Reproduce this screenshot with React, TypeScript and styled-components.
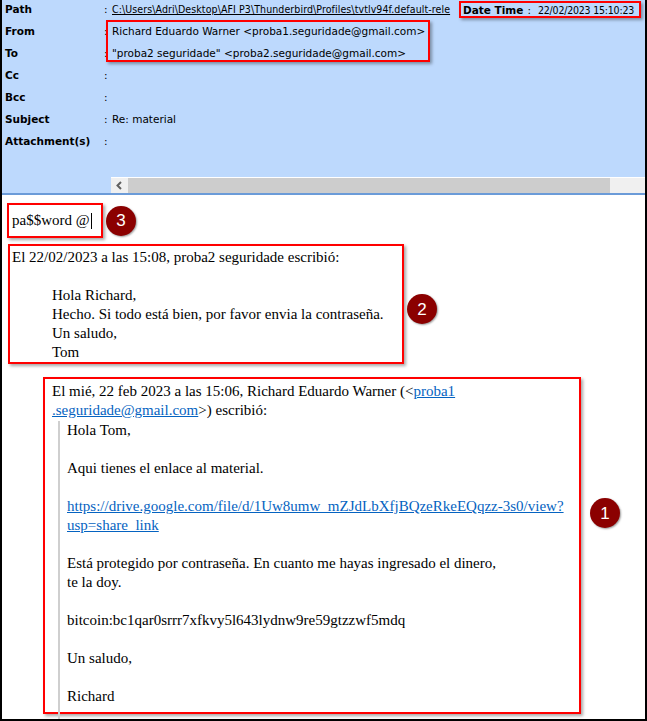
import React from "react";
import styled, { createGlobalStyle } from "styled-components";

const GlobalStyle = createGlobalStyle`
  html, body {
    margin: 0;
    padding: 0;
    background: #fff;
  }
`;

const headerRows = [
  { label: "Cc", value: "" },
  { label: "Bcc", value: "" },
  { label: "Subject", value: "Re: material" },
  { label: "Attachment(s)", value: "" },
];

export default function App() {
  return (
    <>
      <GlobalStyle />
      <Frame>
        <Header>
          <Fields>
            <Row>
              <Label>Path</Label>
              <Colon>:</Colon>
              <PathCell>
                <PathLink>
                  C:\Users\Adri\Desktop\AFI P3\Thunderbird\Profiles\tvtlv94f.default-rele
                </PathLink>
                <DateBox>
                  <Label>Date Time</Label>
                  <DateColon>:</DateColon>
                  <DateValue>22/02/2023 15:10:23</DateValue>
                </DateBox>
              </PathCell>
            </Row>
            <Row>
              <Label>From</Label>
              <Colon>:</Colon>
              <Value>Richard Eduardo Warner &lt;proba1.seguridade@gmail.com&gt;</Value>
            </Row>
            <Row>
              <Label>To</Label>
              <Colon>:</Colon>
              <Value>"proba2 seguridade" &lt;proba2.seguridade@gmail.com&gt;</Value>
            </Row>
            {headerRows.map((r) => (
              <Row key={r.label}>
                <Label>{r.label}</Label>
                <Colon>:</Colon>
                <Value>{r.value}</Value>
              </Row>
            ))}
          </Fields>
          <AddressHighlight />
          <ScrollBar>
            <ScrollButton>
              <svg width="17" height="15" viewBox="0 0 17 15">
                <polyline points="10,4 6.5,7.5 10,11" fill="none" stroke="#606060" strokeWidth="2" />
              </svg>
            </ScrollButton>
            <ScrollThumb />
            <ScrollTrack />
          </ScrollBar>
        </Header>

        <Body>
          <AnnotatedRow>
            <PasswordBox>
              pa$$word @<Caret />
            </PasswordBox>
            <Badge>3</Badge>
          </AnnotatedRow>

          <AnnotatedRow>
            <ReplyBox>
              <Line>El 22/02/2023 a las 15:08, proba2 seguridade escribió:</Line>
              <Line>&nbsp;</Line>
              <Indented>
                <Line>Hola Richard,</Line>
                <Line>Hecho. Si todo está bien, por favor envia la contraseña.</Line>
                <Line>Un saludo,</Line>
                <Line>Tom</Line>
              </Indented>
            </ReplyBox>
            <Badge $offset={16}>2</Badge>
          </AnnotatedRow>

          <AnnotatedRow $align="flex-start">
            <QuoteBox>
              <Line>
                El mié, 22 feb 2023 a las 15:06, Richard Eduardo Warner (&lt;
                <Link>proba1</Link>
              </Line>
              <Line>
                <Link>.seguridade@gmail.com</Link>&gt;) escribió:
              </Line>
              <Quote>
                <Line>Hola Tom,</Line>
                <Line>&nbsp;</Line>
                <Line>Aqui tienes el enlace al material.</Line>
                <Line>&nbsp;</Line>
                <Line>
                  <Link>https://drive.google.com/file/d/1Uw8umw_mZJdLbXfjBQzeRkeEQqzz-3s0/view?</Link>
                </Line>
                <Line>
                  <Link>usp=share_link</Link>
                </Line>
                <Line>&nbsp;</Line>
                <Line>Está protegido por contraseña. En cuanto me hayas ingresado el dinero,</Line>
                <Line>te la doy.</Line>
                <Line>&nbsp;</Line>
                <Line>bitcoin:bc1qar0srrr7xfkvy5l643lydnw9re59gtzzwf5mdq</Line>
                <Line>&nbsp;</Line>
                <Line>Un saludo,</Line>
                <Line>&nbsp;</Line>
                <Line>Richard</Line>
                <Line>&nbsp;</Line>
              </Quote>
            </QuoteBox>
            <Badge $offset={134} $gap={9}>1</Badge>
          </AnnotatedRow>
        </Body>
      </Frame>
    </>
  );
}

const Frame = styled.div`
  width: 647px;
  height: 721px;
  box-sizing: border-box;
  border: 2px solid #000;
  border-top: none;
  display: flex;
  flex-direction: column;
  overflow: hidden;
  background: #fff;
`;

const Header = styled.div`
  position: relative;
  flex: 0 0 195px;
  box-sizing: border-box;
  background: #bdd9fd;
  border-bottom: 2px solid #6b9bd8;
  display: flex;
  flex-direction: column;
`;

const Fields = styled.div`
  padding-left: 3px;
`;

const Row = styled.div`
  display: grid;
  grid-template-columns: 99px 8px 1fr;
  height: 18px;
  margin-bottom: 4px;
  align-items: center;
  font-family: "DejaVu Sans", "Liberation Sans", sans-serif;
  font-size: 10.5px;
  color: #000;
`;

const Label = styled.span`
  font-weight: bold;
  white-space: nowrap;
`;

const Colon = styled.span``;

const Value = styled.span`
  white-space: nowrap;
`;

const PathCell = styled.div`
  display: flex;
  align-items: center;
  min-width: 0;
`;

const PathLink = styled.span`
  flex: 1;
  min-width: 0;
  white-space: nowrap;
  text-decoration: underline;
  font-family: "DejaVu Sans Condensed", "DejaVu Sans", sans-serif;
  font-stretch: condensed;
  letter-spacing: 0.1px;
`;

const DateBox = styled.div`
  flex: 0 0 182px;
  display: flex;
  align-items: center;
  height: 17px;
  box-sizing: border-box;
  margin: 1px 4px 0 6px;
  padding-left: 2px;
  border: 2px solid #f00;
  box-shadow: 2px 2px 3px rgba(0, 0, 0, 0.35);
  white-space: nowrap;
`;

const DateColon = styled.span`
  margin: 0 7px 0 4px;
`;

const DateValue = styled.span`
  font-family: "DejaVu Sans Condensed", "DejaVu Sans", sans-serif;
  font-stretch: condensed;
  letter-spacing: -0.2px;
`;

const AddressHighlight = styled.div`
  position: absolute;
  left: 104px;
  top: 20px;
  width: 324px;
  height: 42px;
  box-sizing: border-box;
  border: 2px solid #f00;
  box-shadow: 2px 2px 3px rgba(0, 0, 0, 0.35);
  pointer-events: none;
`;

const ScrollBar = styled.div`
  margin-top: auto;
  margin-left: 109px;
  height: 15px;
  border-top: 1px solid #fff;
  display: flex;
`;

const ScrollButton = styled.div`
  flex: 0 0 17px;
  background: #f0f0f0;
  display: flex;
  align-items: center;
  justify-content: center;
`;

const ScrollThumb = styled.div`
  flex: 0 0 482px;
  background: #cdcdcd;
`;

const ScrollTrack = styled.div`
  flex: 1;
  background: #f0f0f0;
`;

const Body = styled.div`
  flex: 1;
  padding: 8px 0 0 5px;
  display: flex;
  flex-direction: column;
  font-family: "Liberation Serif", "Times New Roman", serif;
  font-size: 15px;
  line-height: 19px;
  color: #000;
`;

const AnnotatedRow = styled.div<{ $align?: string }>`
  display: flex;
  align-items: ${(p) => p.$align || "center"};
`;

const AnnotationBox = styled.div`
  box-sizing: border-box;
  border: 2px solid #f00;
  box-shadow: 2px 2px 3px rgba(0, 0, 0, 0.35);
`;

const PasswordBox = styled(AnnotationBox)`
  width: 96px;
  height: 35px;
  padding-left: 3px;
  display: flex;
  align-items: center;
  white-space: nowrap;
`;

const Caret = styled.span`
  display: inline-block;
  width: 1px;
  height: 16px;
  margin-left: 1px;
  background: #000;
`;

const ReplyBox = styled(AnnotationBox)`
  margin: 6px 0 0 1px;
  width: 396px;
  height: 120px;
  padding: 2px 0 0 2px;
`;

const Indented = styled.div`
  padding-left: 40px;
`;

const QuoteBox = styled(AnnotationBox)`
  margin: 13px 0 0 36px;
  width: 538px;
  height: 337px;
  padding: 3px 0 0 7px;
  overflow: visible;
`;

const Quote = styled.div`
  margin: 1px 0 0 6px;
  border-left: 2px solid #cfcfcf;
  padding-left: 7px;
`;

const Line = styled.div`
  white-space: nowrap;
`;

const Link = styled.span`
  color: #0563c1;
  text-decoration: underline;
`;

const Badge = styled.div<{ $offset?: number; $gap?: number }>`
  flex: 0 0 30px;
  width: 30px;
  height: 30px;
  margin-left: ${(p) => p.$gap ?? 3}px;
  margin-top: ${(p) => p.$offset ?? 0}px;
  border-radius: 50%;
  background: #8b0000;
  box-shadow: 1px 1px 2px rgba(0, 0, 0, 0.4);
  color: #fff;
  font-family: "Liberation Sans", Arial, sans-serif;
  font-size: 17px;
  display: flex;
  align-items: center;
  justify-content: center;
`;
